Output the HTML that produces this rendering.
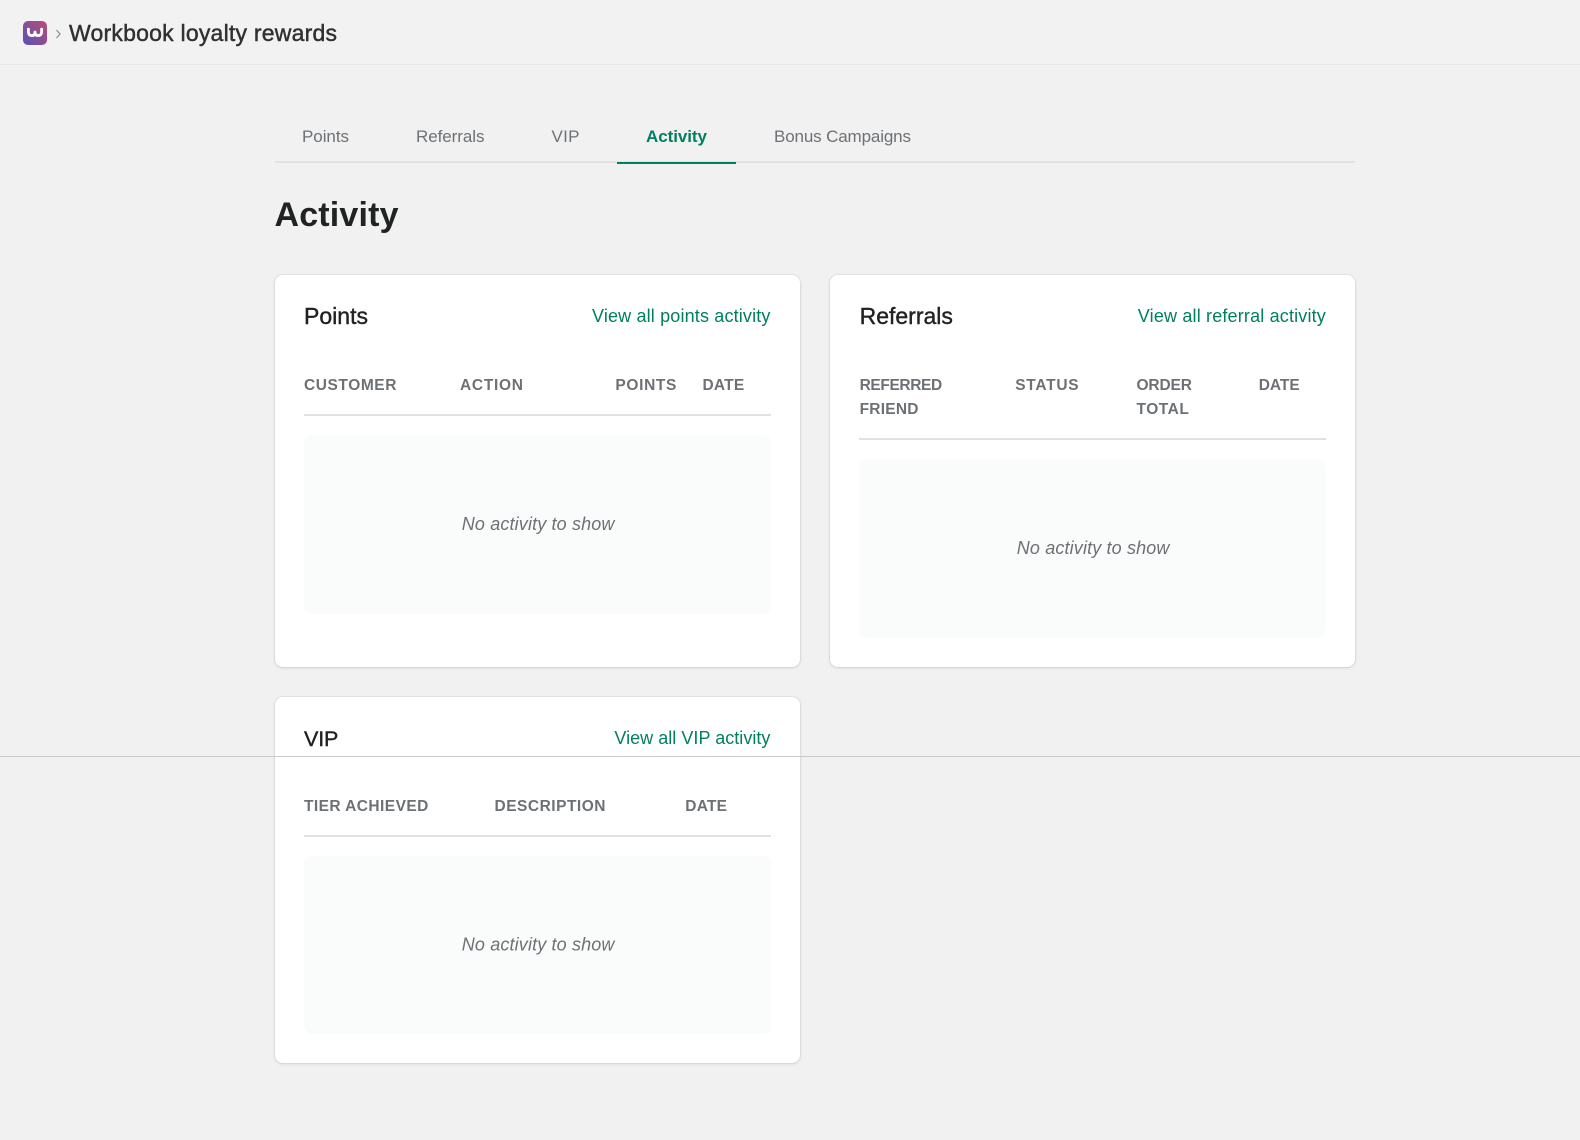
<!DOCTYPE html>
<html><head><meta charset="utf-8"><title>Activity</title>
<style>
html,body{margin:0;padding:0;background:#f1f1f1}
body{position:relative;width:1580px;height:1140px;overflow:hidden;font-family:"Liberation Sans",sans-serif}
.a{position:absolute}
.hdr{left:0;top:0;width:1580px;height:64px;background:#f2f2f2;border-bottom:1px solid #e9e9e9}
.card{background:#fff;border-radius:8px;box-shadow:0 0 0 1px rgba(63,63,68,.05),0 1px 3px rgba(63,63,68,.15)}
.box{background:#fafbfb;border-radius:8px}
.rule{background:#e1e1e1}
svg{position:absolute;left:0;top:0}
text{font-family:"Liberation Sans",sans-serif}
.h{font-size:15.5px;font-weight:700;fill:#6d7175}
.t{font-size:23px;fill:#202223;stroke:#202223;stroke-width:.4px}
.l{font-size:18px;fill:#008060}
.e{font-size:18px;font-style:italic;fill:#6d7175}
.n{font-size:17px;fill:#6d7175}
</style></head><body>
<div class="a hdr"></div>
<div class="a rule" style="left:275px;top:161px;width:1080px;height:2px"></div>
<div class="a" style="left:617px;top:161.5px;width:119px;height:2.5px;background:#008060"></div>

<div class="a card" style="left:275px;top:275px;width:525px;height:392px"></div>
<div class="a rule" style="left:304px;top:414px;width:467px;height:2px"></div>
<div class="a box" style="left:304px;top:435px;width:467px;height:179px"></div>

<div class="a card" style="left:830px;top:275px;width:525px;height:392px"></div>
<div class="a rule" style="left:859px;top:438px;width:467px;height:2px"></div>
<div class="a box" style="left:859px;top:459px;width:467px;height:179px"></div>

<div class="a card" style="left:275px;top:697px;width:525px;height:366px"></div>
<div class="a rule" style="left:304px;top:835px;width:467px;height:2px"></div>
<div class="a box" style="left:304px;top:856px;width:467px;height:178px"></div>

<svg width="1580" height="1140" viewBox="0 0 1580 1140" xmlns="http://www.w3.org/2000/svg">
<defs><linearGradient id="g" x1="0" y1="1" x2="1" y2="0"><stop offset="0" stop-color="#5651b5"/><stop offset="1" stop-color="#bd4c78"/></linearGradient></defs>
<rect x="23" y="21" width="24" height="24" rx="5" fill="url(#g)"/>
<path d="M28.4 29.2V31.8Q28.4 35.6 31.8 35.6Q35 35.6 35 32Q35 35.6 38.2 35.6Q41.6 35.6 41.6 31.8V29.2" fill="none" stroke="#fff" stroke-width="2.8" stroke-linecap="round" stroke-linejoin="round"/>
<path d="M56.5 30L60 34L56.5 38" fill="none" stroke="#8c9196" stroke-width="1.3"/>
<text x="69" y="41" font-size="23" fill="#303030" stroke="#303030" stroke-width=".45" textLength="268" lengthAdjust="spacing">Workbook loyalty rewards</text>

<text class="n" x="302" y="142" textLength="47" lengthAdjust="spacing">Points</text>
<text class="n" x="416" y="142" textLength="68.5" lengthAdjust="spacing">Referrals</text>
<text class="n" x="551.5" y="142" textLength="28" lengthAdjust="spacing">VIP</text>
<text x="646" y="142" font-size="17" font-weight="700" fill="#008060" textLength="61" lengthAdjust="spacing">Activity</text>
<text class="n" x="774" y="142" textLength="137" lengthAdjust="spacing">Bonus Campaigns</text>
<text x="274.5" y="226" font-size="34" font-weight="700" fill="#202223" textLength="124" lengthAdjust="spacing">Activity</text>

<text class="t" x="304" y="324" textLength="64" lengthAdjust="spacing">Points</text>
<text class="l" x="592" y="322" textLength="178.4" lengthAdjust="spacing">View all points activity</text>
<text class="h" x="304" y="390" textLength="92.4" lengthAdjust="spacing">CUSTOMER</text>
<text class="h" x="460" y="390" textLength="63" lengthAdjust="spacing">ACTION</text>
<text class="h" x="615.4" y="390" textLength="61" lengthAdjust="spacing">POINTS</text>
<text class="h" x="702.5" y="390" textLength="41.7" lengthAdjust="spacing">DATE</text>
<text class="e" x="461.8" y="530" textLength="152.6" lengthAdjust="spacing">No activity to show</text>

<text class="t" x="859.6" y="324" textLength="93.3" lengthAdjust="spacing">Referrals</text>
<text class="l" x="1137.8" y="322" textLength="188" lengthAdjust="spacing">View all referral activity</text>
<text class="h" x="859.6" y="390" textLength="82.6" lengthAdjust="spacing">REFERRED</text>
<text class="h" x="859.6" y="414" textLength="58.9" lengthAdjust="spacing">FRIEND</text>
<text class="h" x="1015.2" y="390" textLength="63.4" lengthAdjust="spacing">STATUS</text>
<text class="h" x="1136.5" y="390" textLength="55.4" lengthAdjust="spacing">ORDER</text>
<text class="h" x="1136.5" y="414" textLength="52.3" lengthAdjust="spacing">TOTAL</text>
<text class="h" x="1258.7" y="390" textLength="41" lengthAdjust="spacing">DATE</text>
<text class="e" x="1016.8" y="554" textLength="152.6" lengthAdjust="spacing">No activity to show</text>

<text class="t" style="font-size:21.5px" x="304" y="746" textLength="34.4" lengthAdjust="spacing">VIP</text>
<text class="l" x="614.4" y="744" textLength="156" lengthAdjust="spacing">View all VIP activity</text>
<text class="h" x="304" y="811" textLength="124.3" lengthAdjust="spacing">TIER ACHIEVED</text>
<text class="h" x="494.5" y="811" textLength="111" lengthAdjust="spacing">DESCRIPTION</text>
<text class="h" x="685.3" y="811" textLength="41.7" lengthAdjust="spacing">DATE</text>
<text class="e" x="461.8" y="950.5" textLength="152.6" lengthAdjust="spacing">No activity to show</text>
</svg>
<div class="a" style="left:0;top:756px;width:1580px;height:1px;background:#c9c9c9"></div>
</body></html>
